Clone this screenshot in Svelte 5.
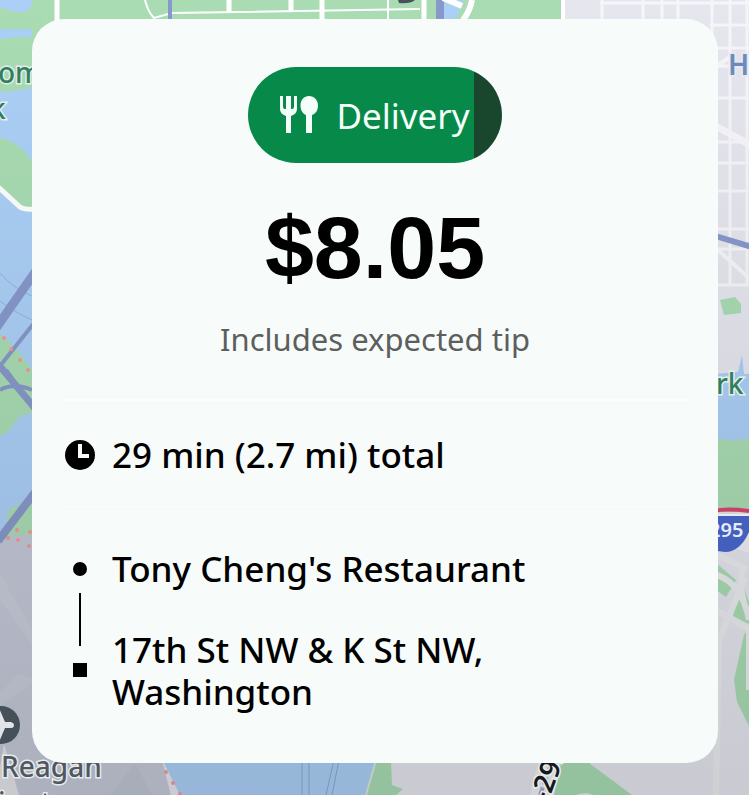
<script>
  const offer = {
    type: 'Delivery',
    price: '$8.05',
    note: 'Includes expected tip',
    summary: '29 min (2.7 mi) total',
    timeLeft: 89,
  };

  const stops = ["Tony Cheng's Restaurant", '17th St NW & K St NW, Washington'];

  // city grid on the east side
  const avenues = [602, 643, 662, 678, 712, 730, 747];
  const streets = [3, 25, 48, 66, 98, 142, 163, 191, 229, 249, 285];

  const ferryDots = [
    [4, 338], [11, 349], [20, 360], [28, 370],
    [17, 530], [30, 532], [8, 538], [18, 540], [29, 546],
    [166, 772], [173, 783], [180, 794],
  ];
</script>

<svelte:head>
  <title>Delivery offer</title>
</svelte:head>

<main>
  <svg class="map" viewBox="0 0 749 795" preserveAspectRatio="xMidYMid slice" aria-hidden="true">
    <defs>
      <linearGradient id="shade" x1="0" y1="0" x2="0" y2="1">
        <stop offset="0" stop-opacity="0" />
        <stop offset="1" stop-opacity="0.12" />
      </linearGradient>
    </defs>
    <rect width="749" height="795" fill="#e5e6ee" />

    <!-- parks and river, west -->
    <path class="park" d="M0 0H561V100H0Z" />
    <path class="water" d="M0 0H33Q31 13 20 12Q12 12 7 9L0 8ZM0 29H32V37Q14 36 0 39ZM0 92Q22 91 36 86V540H0Z" />
    <path class="park" d="M0 138Q25 143 36 170V209H22L0 187Z" />
    <path class="park" d="M0 334Q18 347 36 376V414Q24 411 15 422Q10 432 0 436Z" />
    <path class="park" d="M5 536L8 510Q18 506 36 492V545H5Z" />
    <path d="M-5 184L20 207Q24 210 36 209" class="road" stroke-width="5" />
    <path d="M0 273Q12 288 36 298M0 301Q14 312 36 322" fill="none" stroke="#91b4dd" />
    <path class="freeway" stroke-width="9" d="M-4 328L38 268" />
    <path class="freeway" stroke-width="4" d="M0 366L38 318M0 390Q14 382 32 390M6 370Q14 380 18 390" />
    <path class="freeway" stroke-width="7" d="M-2 364L38 412" />
    <path d="M0 540L14 535H36L160 752L172 800H0Z" fill="#c4c8d7" />
    <path d="M0 574L36 636V650L0 600ZM0 693L18 674L36 680L0 706Z" fill="#d0d3df" opacity="0.4" />
    <path class="freeway" stroke-width="8" d="M-2 541L36 491" />

    <!-- north edge -->
    <path class="road" stroke-width="5" d="M57 0V24" />
    <path class="road" stroke-width="2" d="M145 0Q148 12 154 18L172 13L420 9" />
    <path class="road" stroke-width="5" d="M229 0V12M291 0V12M322 0V20M424 0V20" />
    <path class="road" stroke-width="2" d="M388 0V20" />
    <path class="freeway" stroke-width="4" d="M170 0V20" />
    <path class="water" d="M444 0H463L456 20H442Z" />
    <path class="freeway" stroke-width="8" d="M440 0V20" />
    <path class="road" stroke-width="6" d="M443 -2L462 6M472 0Q470 11 463 20" />
    <path d="M398 0H415Q410 4 399 3Z" fill="#48505b" />
    <path class="road" stroke-width="4" d="M563 0V20" />

    <!-- street grid -->
    {#each avenues as x}
      <path class="street" stroke-width="3" d="M{x} 0V{x > 700 ? 285 : 20}" />
    {/each}
    {#each streets as y}
      <path class="street" stroke-width="3" d="M{y < 20 ? 600 : 710} {y}H749" />
    {/each}
    <path class="street" stroke-width="7" d="M712 124L752 146" />
    <path class="street" stroke-width="4" d="M714 68L730 57M718 250L749 278" />
    <path class="freeway" stroke-width="6" d="M712 235L752 247" />

    <!-- east side -->
    <path class="park" d="M720 300L735 297L741 304V313L724 315Z" />
    <path class="water" d="M714 374L738 372L742 355L744 374H749V442H714Z" />
    <path class="park" d="M714 437Q725 442 749 439V512H714Z" />
    <path d="M714 534Q724 545 740 550L749 553V515H714Z" fill="#eef0f6" />
    <path d="M714 515H749V532Q740 552 725 552Q718 552 712 549Z" fill="#4968cf" />
    <path d="M714 511Q726 508 749 511" fill="none" stroke="#dc4570" stroke-width="4" />
    <path d="M714 515H749" stroke="#fff" stroke-width="2" />
    <path class="park" d="M716 563L736 580L726 597L716 590ZM740 577L749 602V624L733 616ZM744 635L749 628V726L737 702L734 680Z" />
    <path class="lane" stroke-width="6" d="M712 552L744 568Q738 580 744 602M714 574Q742 582 749 620M745 578L719 640L716 795M716 610L749 629V690" />

    <!-- south edge -->
    <path class="water" d="M160 755H380V795H180Z" />
    <path d="M302 760V795M309 760V795M334 760L326 795M339 760L332 795" stroke="#88a9d5" />
    <path class="park" d="M376 760H391L392 785L403 789L396 795H365Z" />
    <path d="M376 760L366 795" stroke="#d8e6dd" stroke-width="2" />
    <path d="M530 795Q532 778 541 760H561L554 795Z" fill="#eff0f2" />
    <path class="park" d="M562 760H585L632 795H554Z" />
    <path d="M576 795Q586 791 593 795Z" fill="#e5e6ee" />
    <path d="M540 795L552 762" stroke="#aaaed8" stroke-width="4" stroke-dasharray="8 3" />
    <path d="M110 795L135 763L152 795Z" fill="#b9bfd0" opacity="0.5" />
    <path d="M4 744L19 795H-5Z" fill="#e4e5e8" />

    {#each ferryDots as [cx, cy]}
      <circle {cx} {cy} r="2" fill="#f09a9c" />
    {/each}

    <rect width="749" height="795" fill="url(#shade)" />

    <circle cx="1" cy="725" r="19" fill="#465059" />
    <path d="M-4 708H-1L5 722H11Q14 723 14 725Q14 728 11 728H5L-1 742H-4Z" fill="#e1e3e8" />
    <g class="labels">
      <text x="-2" y="83" fill="#2f805d">om</text>
      <text x="-10" y="119" fill="#2f805d">k</text>
      <text x="728" y="75" fill="#6d89be" font-weight="600">H</text>
      <text x="716" y="394" fill="#2f805d">rk</text>
      <text x="1" y="777" fill="#505762">Reagan</text>
      <text x="-2" y="813" fill="#505762">ington</text>
      <text fill="#15191c" font-weight="600" transform="translate(548 803) rotate(-70)">-295</text>
    </g>
    <text class="shield" x="709" y="537">295</text>
  </svg>

  <article class="card">
    <div class="badge" style="--left: {offer.timeLeft}%">
      <svg width="38" height="38" viewBox="0 0 38 38" aria-hidden="true">
        <path fill="currentColor" d="M0 0H3V11Q3 13 5 13H6V0H11V13H12Q14 13 14 11V0H17V13Q17 18 11 20V37H6V20Q0 18 0 13Z" />
        <path fill="currentColor" d="M29 0C34 0 38 4 38 9.500C38 14.500 35.500 18 32 19V37H26V19C23 18 20.500 14.500 20.500 9.500C20.500 4 24 0 29 0Z" />
      </svg>
      <span>{offer.type}</span>
    </div>
    <h1>{offer.price}</h1>
    <p class="note">{offer.note}</p>

    <div class="summary">
      <svg width="30" height="30" viewBox="0 0 30 30" aria-hidden="true">
        <circle cx="15" cy="15" r="15" />
        <path d="M15 4V16H24" fill="none" stroke="#f7fcfa" stroke-width="4" />
      </svg>
      <span>{offer.summary}</span>
    </div>

    <div class="route">
      <svg width="30" height="108" viewBox="0 0 30 108" aria-hidden="true">
        <circle cx="15" cy="7" r="7" />
        <path d="M14 31H16V84H14ZM8 101H22V115H8Z" />
      </svg>
      <ol>
        {#each stops as stop}
          <li>{stop}</li>
        {/each}
      </ol>
    </div>
  </article>
</main>

<style>
  :global(body) {
    margin: 0;
  }
  main {
    position: relative;
    min-height: 100vh;
    box-sizing: border-box;
    padding: 19px 31px 32px 32px;
    overflow: hidden;
    font-family: "Noto Sans", sans-serif;
    color: #000;
  }
  .map {
    position: absolute;
    top: 0;
    left: 0;
    width: 100%;
    height: 100%;
  }
  .park {
    fill: #a9dcb3;
  }
  .water {
    fill: #abcff6;
  }
  .road,
  .street,
  .lane,
  .freeway {
    fill: none;
    stroke: #fff;
  }
  .street {
    stroke: #f6f6fa;
  }
  .lane {
    stroke: #ebecef;
  }
  .freeway {
    stroke: #8799cb;
  }
  .labels {
    font-size: 28px;
    font-weight: 500;
    stroke: #e6ebec;
    stroke-width: 3px;
    paint-order: stroke;
  }
  .shield {
    font-size: 20px;
    font-weight: 600;
    fill: #e6eafa;
  }
  .card {
    position: relative;
    padding: 48px 30px 50px;
    border-radius: 32px;
    background: #f7fcfa;
  }
  .badge {
    display: flex;
    align-items: center;
    gap: 18px;
    width: fit-content;
    height: 96px;
    margin: 0 auto;
    padding: 0 32px;
    box-sizing: border-box;
    border-radius: 48px;
    background: linear-gradient(90deg, #078a49 var(--left), #18472e var(--left));
    color: #f5fffa;
    font-size: 35px;
    font-weight: 400;
  }
  h1 {
    margin: 37px 0 0;
    font-family: "Liberation Sans", sans-serif;
    font-size: 88px;
    font-weight: 700;
    line-height: 96px;
    text-align: center;
  }
  .note {
    margin: 21px 0 38px;
    color: #5c5f5e;
    font-size: 31px;
    font-weight: 400;
    line-height: 44px;
    text-align: center;
  }
  .summary,
  .route {
    display: flex;
    gap: 17px;
    padding: 0 3px;
    font-size: 35px;
    font-weight: 500;
    line-height: 42px;
  }
  .summary {
    align-items: center;
    padding-top: 33px;
    padding-bottom: 33px;
    border-top: 2px solid #fbfefd;
    border-bottom: 1px solid #f4f9f7;
  }
  .route {
    padding-top: 38px;
  }
  .summary svg,
  .route svg {
    flex: none;
  }
  .route svg {
    margin-top: 14px;
    overflow: visible;
  }
  ol {
    display: grid;
    gap: 39px;
    max-width: 440px;
    margin: 0;
    padding: 0;
    list-style: none;
  }
</style>
